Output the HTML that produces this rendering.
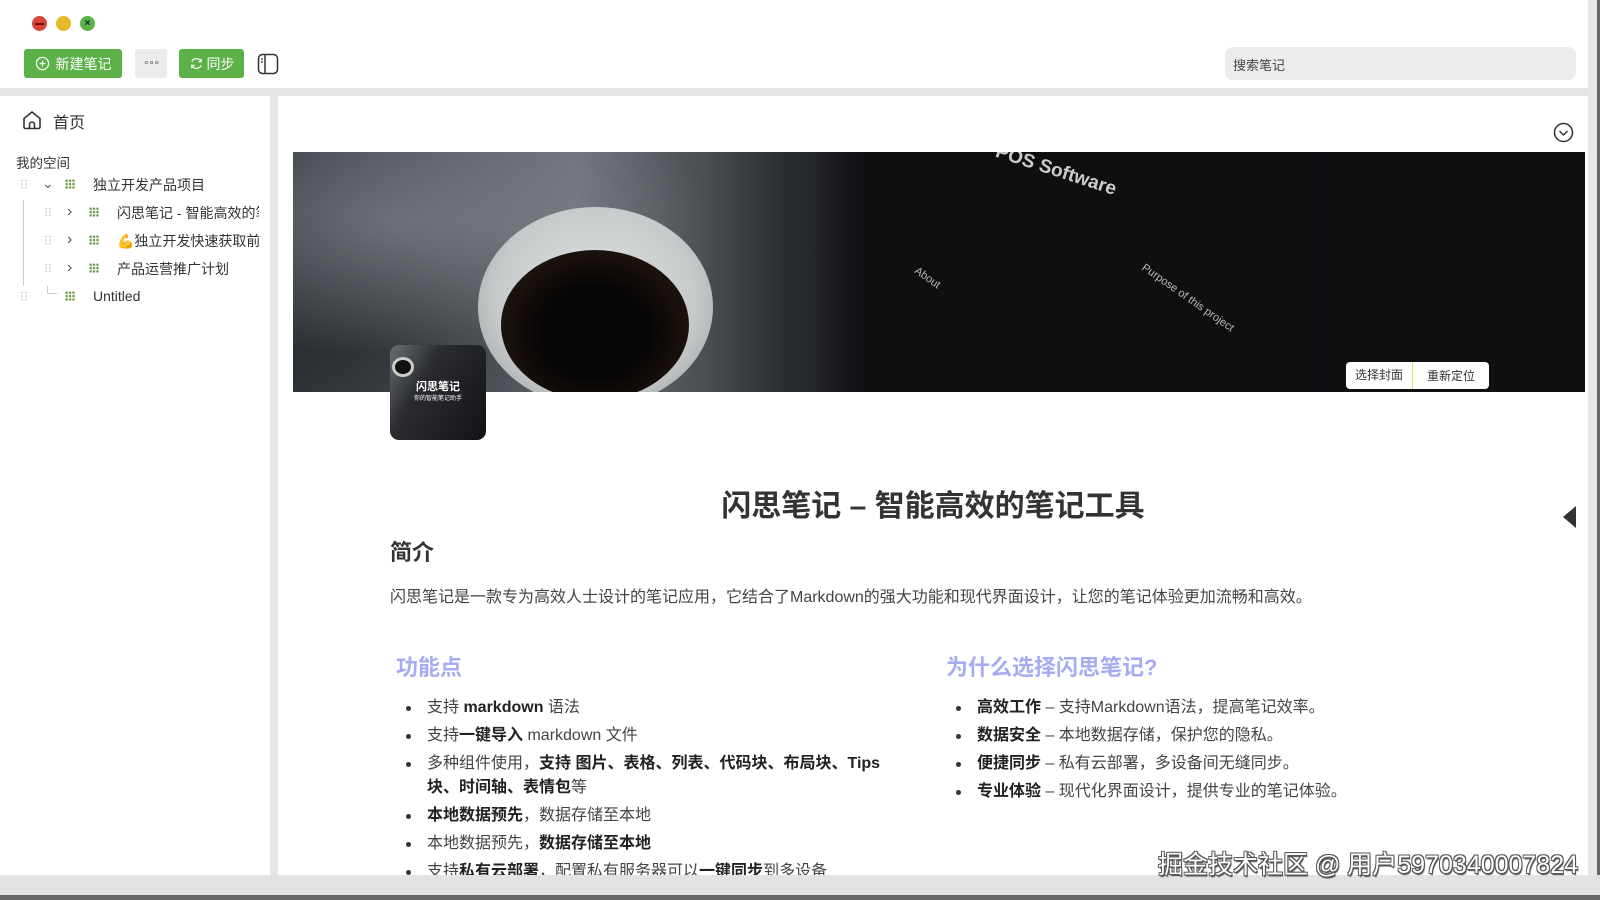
<!DOCTYPE html>
<html><head><meta charset="utf-8"><style>
*{margin:0;padding:0;box-sizing:border-box}
body{width:1600px;height:900px;overflow:hidden;background:#fff;font-family:"Liberation Sans","Noto Sans CJK SC",sans-serif;color:#333;position:relative}
.abs{position:absolute}
.dot{position:absolute;top:16px;width:15px;height:15px;border-radius:50%}
.btn{position:absolute;top:49px;height:29px;border-radius:3px;background:#5cb248;color:#fff;font-size:14px;display:flex;align-items:center;justify-content:center;gap:6px}
.tree{position:absolute;font-size:14px;color:#333;white-space:nowrap}
.grid{position:absolute;width:10px;height:10px;background-image:radial-gradient(circle,#6a9a4a 1.1px,transparent 1.3px);background-size:3.4px 3.4px}
.drag{position:absolute;width:8px;height:10px;background-image:radial-gradient(circle,#ddd 1px,transparent 1.2px);background-size:4px 3.4px}
ul{position:absolute;list-style:none;font-size:16px;color:#444}
li{position:relative;padding-left:37px;line-height:24px;margin-bottom:4px}
li:before{content:"";position:absolute;left:16px;top:10px;width:5px;height:5px;border-radius:50%;background:#333}
b{color:#222;font-weight:700}
</style></head><body>
<div class="dot" style="left:32px;background:#d9433a"><div style="position:absolute;left:3px;top:6.5px;width:9px;height:2px;background:#6b1510"></div></div>
<div class="dot" style="left:56px;background:#e6b82a"></div>
<div class="dot" style="left:80px;background:#5cb248;color:#123;font-size:10px;line-height:15px;text-align:center;font-weight:bold">×</div>

<div class="btn" style="left:24px;width:98px"><svg width="15" height="15" viewBox="0 0 16 16"><circle cx="8" cy="8" r="6.5" fill="none" stroke="#fff" stroke-width="1.3"/><path d="M8 5v6M5 8h6" stroke="#fff" stroke-width="1.3"/></svg>新建笔记</div>
<div class="btn" style="left:135px;width:32px;background:#ececec;color:#555;font-size:10px;letter-spacing:-1px">∘∘∘</div>
<div class="btn" style="left:179px;width:65px;gap:3px"><svg width="15" height="15" viewBox="0 0 16 16"><path d="M13 6A5.5 5.5 0 0 0 3 6M3 10a5.5 5.5 0 0 0 10 0" fill="none" stroke="#fff" stroke-width="1.3"/><path d="M13 3v3h-3M3 13v-3h3" fill="none" stroke="#fff" stroke-width="1.3"/></svg>同步</div>
<svg class="abs" style="left:257px;top:53px" width="22" height="22" viewBox="0 0 22 22"><rect x="1.5" y="1.5" width="19" height="19" rx="4" fill="none" stroke="#333" stroke-width="1.5"/><path d="M8 2v18" stroke="#333" stroke-width="1.5"/><path d="M4 6h2M4 9h2" stroke="#333" stroke-width="1.2"/></svg>
<div class="abs" style="left:1225px;top:47px;width:351px;height:33px;border-radius:8px;background:#ececec;font-size:13px;color:#444;padding:8px 8px">搜索笔记</div>

<div class="abs" style="left:0;top:88px;width:1600px;height:8px;background:#e6e6e6"></div>
<div class="abs" style="left:270px;top:96px;width:8px;height:780px;background:#e6e6e6"></div>
<div class="abs" style="left:1588px;top:0;width:9px;height:900px;background:#e8e8e8"></div>
<div class="abs" style="left:1597px;top:0;width:3px;height:900px;background:#666"></div>
<div class="abs" style="left:0;top:875px;width:1600px;height:20px;background:#e3e3e3"></div>
<div class="abs" style="left:0;top:895px;width:1600px;height:5px;background:#666"></div>

<svg class="abs" style="left:21px;top:109px" width="22" height="22" viewBox="0 0 22 22"><path d="M3 9.5L11 3l8 6.5V18a1.5 1.5 0 0 1-1.5 1.5h-13A1.5 1.5 0 0 1 3 18z" fill="none" stroke="#333" stroke-width="1.6" stroke-linejoin="round"/><path d="M8.5 19.5v-4a2.5 2.5 0 0 1 5 0v4" fill="none" stroke="#333" stroke-width="1.6"/></svg>
<div class="tree" style="left:53px;top:109px;font-size:16px">首页</div>
<div class="tree" style="left:16px;top:152px;font-size:13.5px">我的空间</div>
<div class="drag" style="left:20px;top:179px"></div>
<div class="tree" style="left:42px;top:175px;color:#666">⌄</div>
<div class="grid" style="left:65px;top:179px"></div>
<div class="tree" style="left:93px;top:175px">独立开发产品项目</div>
<div class="abs" style="left:23px;top:200px;width:1px;height:86px;background:#ccc"></div>
<div class="drag" style="left:44px;top:207px"></div><div class="tree" style="left:67px;top:203px;color:#555;font-size:16px">›</div><div class="grid" style="left:89px;top:207px"></div><div class="tree" style="left:117px;top:203px;width:142px;overflow:hidden">闪思笔记 - 智能高效的笔</div>
<div class="drag" style="left:44px;top:235px"></div><div class="tree" style="left:67px;top:231px;color:#555;font-size:16px">›</div><div class="grid" style="left:89px;top:235px"></div><div class="tree" style="left:117px;top:231px;width:142px;overflow:hidden">💪独立开发快速获取前</div>
<div class="drag" style="left:44px;top:263px"></div><div class="tree" style="left:67px;top:259px;color:#555;font-size:16px">›</div><div class="grid" style="left:89px;top:263px"></div><div class="tree" style="left:117px;top:259px">产品运营推广计划</div>
<div class="drag" style="left:20px;top:291px"></div>
<div class="abs" style="left:47px;top:286px;width:10px;height:8px;border-left:1px solid #ccc;border-bottom:1px solid #ccc"></div>
<div class="grid" style="left:65px;top:291px"></div>
<div class="tree" style="left:93px;top:288px">Untitled</div>

<svg class="abs" style="left:1553px;top:122px" width="21" height="21" viewBox="0 0 21 21"><circle cx="10.5" cy="10.5" r="9" fill="none" stroke="#333" stroke-width="1.5"/><path d="M6.5 9l4 4 4-4" fill="none" stroke="#333" stroke-width="1.5"/></svg>

<div class="abs" style="left:293px;top:152px;width:1292px;height:240px;overflow:hidden;background:linear-gradient(90deg,#3a3f45 0%,#5d6268 14%,#6f747a 22%,#4a4e53 32%,#2a2d31 38%,#141518 46%,#101113 70%,#16181b 90%,#2a2d31 100%)">
  <div class="abs" style="left:0;top:0;width:520px;height:240px;background:radial-gradient(ellipse at 20% 30%,rgba(140,145,150,.5),transparent 55%),radial-gradient(ellipse at 10% 85%,rgba(30,32,36,.6),transparent 50%)"></div>
  <div class="abs" style="left:520px;top:0;width:772px;height:240px;background:linear-gradient(90deg,rgba(20,22,25,0) 0%,rgba(13,14,16,.9) 8%,#0f1012 100%)"></div>
  <div class="abs" style="left:185px;top:55px;width:235px;height:200px;border-radius:50%;background:radial-gradient(ellipse at 50% 45%,#dfe3e3 0%,#c6caca 60%,#8e9394 100%)"></div>
  <div class="abs" style="left:208px;top:98px;width:188px;height:150px;border-radius:50%;background:radial-gradient(ellipse at 50% 55%,#060505 40%,#1f140e 75%,#3a2a22 100%)"></div>
  <div class="abs" style="left:700px;top:8px;color:#ccc;font-size:19px;font-weight:bold;transform:rotate(18deg)">POS Software</div>
  <div class="abs" style="left:620px;top:120px;color:#bbb;font-size:11px;transform:rotate(35deg)">About</div>
  <div class="abs" style="left:840px;top:140px;color:#bbb;font-size:11px;transform:rotate(35deg)">Purpose of this project</div>
  <div class="abs" style="left:1053px;top:210px;height:27px;display:flex;background:#fff;border-radius:4px;font-size:12px;color:#333;align-items:center">
    <span style="padding:0 9px;border-right:1px solid #e6d66a;line-height:27px">选择封面</span><span style="padding:0 14px">重新定位</span></div>
</div>
<div class="abs" style="left:390px;top:345px;width:96px;height:95px;border-radius:9px;overflow:hidden;background:linear-gradient(120deg,#6a6e72 0%,#2a2c30 35%,#121315 100%)">
  <div class="abs" style="left:2px;top:12px;width:22px;height:20px;border-radius:50%;background:#111;border:3px solid #ccc"></div>
  <div class="abs" style="left:0;top:33px;width:96px;text-align:center;color:#fff;font-size:11px;font-weight:bold">闪思笔记</div>
  <div class="abs" style="left:0;top:48px;width:96px;text-align:center;color:#fff;font-size:6px">你的智能笔记助手</div>
</div>

<div class="abs" style="left:278px;top:481px;width:1310px;text-align:center;font-size:30px;font-weight:bold;color:#333">闪思笔记 – 智能高效的笔记工具</div>
<div class="abs" style="left:390px;top:535px;font-size:22px;font-weight:bold;color:#333">简介</div>
<div class="abs" style="left:390px;top:583px;font-size:16px;color:#444">闪思笔记是一款专为高效人士设计的笔记应用，它结合了Markdown的强大功能和现代界面设计，让您的笔记体验更加流畅和高效。</div>
<div class="abs" style="left:396px;top:650px;font-size:22px;font-weight:bold;color:#a6acf2">功能点</div>
<div class="abs" style="left:946px;top:650px;font-size:22px;font-weight:bold;color:#a6acf2">为什么选择闪思笔记?</div>
<div class="abs" style="left:0;top:0;width:1588px;height:875px;overflow:hidden;pointer-events:none">
<ul style="left:390px;top:696px;width:510px">
<li>支持 <b>markdown</b> 语法</li>
<li>支持<b>一键导入</b> markdown 文件</li>
<li>多种组件使用，<b>支持 图片、表格、列表、代码块、布局块、Tips 块、时间轴、表情包</b>等</li>
<li><b>本地数据预先</b>，数据存储至本地</li>
<li>本地数据预先，<b>数据存储至本地</b></li>
<li>支持<b>私有云部署</b>，配置私有服务器可以<b>一键同步</b>到多设备</li>
</ul></div>
<ul style="left:940px;top:696px;width:600px">
<li><b>高效工作</b> – 支持Markdown语法，提高笔记效率。</li>
<li><b>数据安全</b> – 本地数据存储，保护您的隐私。</li>
<li><b>便捷同步</b> – 私有云部署，多设备间无缝同步。</li>
<li><b>专业体验</b> – 现代化界面设计，提供专业的笔记体验。</li>
</ul>
<svg class="abs" style="left:1563px;top:506px" width="14" height="22" viewBox="0 0 14 22"><path d="M13 0L0 11l13 11z" fill="#333"/></svg>
<div class="abs" style="left:1158px;top:845px;font-size:25px;color:#fff;text-shadow:-1px -1px 0 #555,1px -1px 0 #555,-1px 1px 0 #555,1px 1px 0 #555,1px 2px 1px #444">掘金技术社区 @ 用户5970340007824</div>
</body></html>
